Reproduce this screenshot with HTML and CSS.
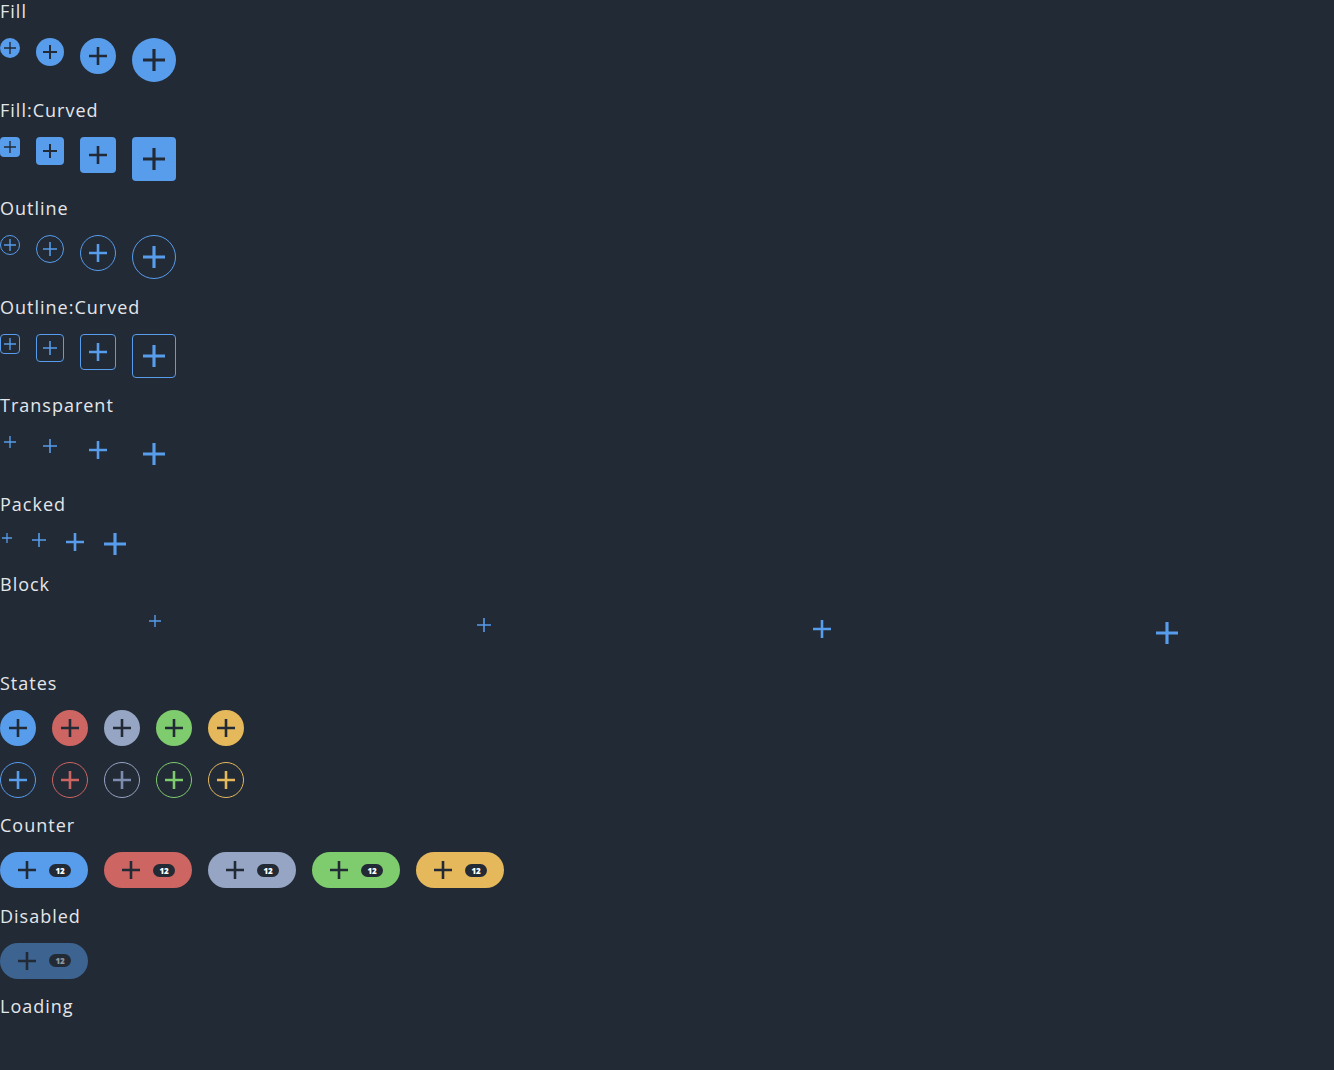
FILE: index.html
```html
<!DOCTYPE html>
<html lang="en">
<head>
<meta charset="utf-8">
<title>Buttons</title>
<link rel="stylesheet" href="styles.css">
</head>
<body>
<main class="page">
  <section class="sec">
    <h2 class="title">Fill</h2>
    <div class="row">
      <button class="btn fill round s1"><svg class="ic" viewBox="0 0 14 14"><path d="M6.2 0h1.6v6.2H14v1.6H7.8V14H6.2V7.8H0V6.2h6.2z"/></svg></button>
      <button class="btn fill round s2"><svg class="ic" viewBox="0 0 14 14"><path d="M6 0h2v6h6v2H8v6H6V8H0V6h6z"/></svg></button>
      <button class="btn fill round s3"><svg class="ic" viewBox="0 0 14 14"><path d="M6 0h2v6h6v2H8v6H6V8H0V6h6z"/></svg></button>
      <button class="btn fill round s4"><svg class="ic" viewBox="0 0 14 14"><path d="M6 0h2v6h6v2H8v6H6V8H0V6h6z"/></svg></button>
    </div>
  </section>
  <section class="sec">
    <h2 class="title">Fill:Curved</h2>
    <div class="row">
      <button class="btn fill curved s1"><svg class="ic" viewBox="0 0 14 14"><path d="M6.2 0h1.6v6.2H14v1.6H7.8V14H6.2V7.8H0V6.2h6.2z"/></svg></button>
      <button class="btn fill curved s2"><svg class="ic" viewBox="0 0 14 14"><path d="M6 0h2v6h6v2H8v6H6V8H0V6h6z"/></svg></button>
      <button class="btn fill curved s3"><svg class="ic" viewBox="0 0 14 14"><path d="M6 0h2v6h6v2H8v6H6V8H0V6h6z"/></svg></button>
      <button class="btn fill curved s4"><svg class="ic" viewBox="0 0 14 14"><path d="M6 0h2v6h6v2H8v6H6V8H0V6h6z"/></svg></button>
    </div>
  </section>
  <section class="sec">
    <h2 class="title">Outline</h2>
    <div class="row">
      <button class="btn outline round s1"><svg class="ic" viewBox="0 0 14 14"><path d="M6.2 0h1.6v6.2H14v1.6H7.8V14H6.2V7.8H0V6.2h6.2z"/></svg></button>
      <button class="btn outline round s2"><svg class="ic" viewBox="0 0 14 14"><path d="M6.2 0h1.6v6.2H14v1.6H7.8V14H6.2V7.8H0V6.2h6.2z"/></svg></button>
      <button class="btn outline round s3"><svg class="ic" viewBox="0 0 14 14"><path d="M6 0h2v6h6v2H8v6H6V8H0V6h6z"/></svg></button>
      <button class="btn outline round s4"><svg class="ic" viewBox="0 0 14 14"><path d="M6 0h2v6h6v2H8v6H6V8H0V6h6z"/></svg></button>
    </div>
  </section>
  <section class="sec">
    <h2 class="title">Outline:Curved</h2>
    <div class="row">
      <button class="btn outline curved s1"><svg class="ic" viewBox="0 0 14 14"><path d="M6.2 0h1.6v6.2H14v1.6H7.8V14H6.2V7.8H0V6.2h6.2z"/></svg></button>
      <button class="btn outline curved s2"><svg class="ic" viewBox="0 0 14 14"><path d="M6.2 0h1.6v6.2H14v1.6H7.8V14H6.2V7.8H0V6.2h6.2z"/></svg></button>
      <button class="btn outline curved s3"><svg class="ic" viewBox="0 0 14 14"><path d="M6 0h2v6h6v2H8v6H6V8H0V6h6z"/></svg></button>
      <button class="btn outline curved s4"><svg class="ic" viewBox="0 0 14 14"><path d="M6 0h2v6h6v2H8v6H6V8H0V6h6z"/></svg></button>
    </div>
  </section>
  <section class="sec">
    <h2 class="title">Transparent</h2>
    <div class="row">
      <button class="btn ghost s1"><svg class="ic" viewBox="0 0 14 14"><path d="M6.2 0h1.6v6.2H14v1.6H7.8V14H6.2V7.8H0V6.2h6.2z"/></svg></button>
      <button class="btn ghost s2"><svg class="ic" viewBox="0 0 14 14"><path d="M6.2 0h1.6v6.2H14v1.6H7.8V14H6.2V7.8H0V6.2h6.2z"/></svg></button>
      <button class="btn ghost s3"><svg class="ic" viewBox="0 0 14 14"><path d="M6 0h2v6h6v2H8v6H6V8H0V6h6z"/></svg></button>
      <button class="btn ghost s4"><svg class="ic" viewBox="0 0 14 14"><path d="M6 0h2v6h6v2H8v6H6V8H0V6h6z"/></svg></button>
    </div>
  </section>
  <section class="sec">
    <h2 class="title">Packed</h2>
    <div class="row">
      <button class="btn ghost packed s1"><svg class="ic" viewBox="0 0 14 14"><path d="M6.1 0h1.8v6.1H14v1.8H7.9V14H6.1V7.9H0V6.1h6.1z"/></svg></button>
      <button class="btn ghost packed s2"><svg class="ic" viewBox="0 0 14 14"><path d="M6.2 0h1.6v6.2H14v1.6H7.8V14H6.2V7.8H0V6.2h6.2z"/></svg></button>
      <button class="btn ghost packed s3"><svg class="ic" viewBox="0 0 14 14"><path d="M6 0h2v6h6v2H8v6H6V8H0V6h6z"/></svg></button>
      <button class="btn ghost packed s4"><svg class="ic" viewBox="0 0 14 14"><path d="M6 0h2v6h6v2H8v6H6V8H0V6h6z"/></svg></button>
    </div>
  </section>
  <section class="sec">
    <h2 class="title">Block</h2>
    <div class="row">
      <button class="btn ghost block s1"><svg class="ic" viewBox="0 0 14 14"><path d="M6.2 0h1.6v6.2H14v1.6H7.8V14H6.2V7.8H0V6.2h6.2z"/></svg></button>
      <button class="btn ghost block s2"><svg class="ic" viewBox="0 0 14 14"><path d="M6.2 0h1.6v6.2H14v1.6H7.8V14H6.2V7.8H0V6.2h6.2z"/></svg></button>
      <button class="btn ghost block s3"><svg class="ic" viewBox="0 0 14 14"><path d="M6 0h2v6h6v2H8v6H6V8H0V6h6z"/></svg></button>
      <button class="btn ghost block s4"><svg class="ic" viewBox="0 0 14 14"><path d="M6 0h2v6h6v2H8v6H6V8H0V6h6z"/></svg></button>
    </div>
  </section>
  <section class="sec">
    <h2 class="title">States</h2>
    <div class="stack">
      <div class="row">
        <button class="btn fill round s3 c-blue"><svg class="ic" viewBox="0 0 14 14"><path d="M6 0h2v6h6v2H8v6H6V8H0V6h6z"/></svg></button>
        <button class="btn fill round s3 c-red"><svg class="ic" viewBox="0 0 14 14"><path d="M6 0h2v6h6v2H8v6H6V8H0V6h6z"/></svg></button>
        <button class="btn fill round s3 c-gray"><svg class="ic" viewBox="0 0 14 14"><path d="M6 0h2v6h6v2H8v6H6V8H0V6h6z"/></svg></button>
        <button class="btn fill round s3 c-green"><svg class="ic" viewBox="0 0 14 14"><path d="M6 0h2v6h6v2H8v6H6V8H0V6h6z"/></svg></button>
        <button class="btn fill round s3 c-yellow"><svg class="ic" viewBox="0 0 14 14"><path d="M6 0h2v6h6v2H8v6H6V8H0V6h6z"/></svg></button>
      </div>
      <div class="row">
        <button class="btn outline round s3 c-blue"><svg class="ic" viewBox="0 0 14 14"><path d="M6 0h2v6h6v2H8v6H6V8H0V6h6z"/></svg></button>
        <button class="btn outline round s3 c-red"><svg class="ic" viewBox="0 0 14 14"><path d="M6 0h2v6h6v2H8v6H6V8H0V6h6z"/></svg></button>
        <button class="btn outline round s3 c-gray"><svg class="ic" viewBox="0 0 14 14"><path d="M6 0h2v6h6v2H8v6H6V8H0V6h6z"/></svg></button>
        <button class="btn outline round s3 c-green"><svg class="ic" viewBox="0 0 14 14"><path d="M6 0h2v6h6v2H8v6H6V8H0V6h6z"/></svg></button>
        <button class="btn outline round s3 c-yellow"><svg class="ic" viewBox="0 0 14 14"><path d="M6 0h2v6h6v2H8v6H6V8H0V6h6z"/></svg></button>
      </div>
    </div>
  </section>
  <section class="sec">
    <h2 class="title">Counter</h2>
    <div class="row">
      <button class="btn fill pill c-blue"><svg class="ic" viewBox="0 0 14 14"><path d="M6 0h2v6h6v2H8v6H6V8H0V6h6z"/></svg><span class="badge">12</span></button>
      <button class="btn fill pill c-red"><svg class="ic" viewBox="0 0 14 14"><path d="M6 0h2v6h6v2H8v6H6V8H0V6h6z"/></svg><span class="badge">12</span></button>
      <button class="btn fill pill c-gray"><svg class="ic" viewBox="0 0 14 14"><path d="M6 0h2v6h6v2H8v6H6V8H0V6h6z"/></svg><span class="badge">12</span></button>
      <button class="btn fill pill c-green"><svg class="ic" viewBox="0 0 14 14"><path d="M6 0h2v6h6v2H8v6H6V8H0V6h6z"/></svg><span class="badge">12</span></button>
      <button class="btn fill pill c-yellow"><svg class="ic" viewBox="0 0 14 14"><path d="M6 0h2v6h6v2H8v6H6V8H0V6h6z"/></svg><span class="badge">12</span></button>
    </div>
  </section>
  <section class="sec">
    <h2 class="title">Disabled</h2>
    <div class="row">
      <button class="btn fill pill c-blue" disabled><svg class="ic" viewBox="0 0 14 14"><path d="M6 0h2v6h6v2H8v6H6V8H0V6h6z"/></svg><span class="badge">12</span></button>
    </div>
  </section>
  <section class="sec">
    <h2 class="title">Loading</h2>
  </section>
</main>
</body>
</html>
```

FILE: styles.css
```css
* { box-sizing: border-box; }

html, body {
  margin: 0;
  padding: 0;
  background: #222a35;
}

body {
  font-family: "Open Sans", "Liberation Sans", sans-serif;
  color: #e4e6ea;
  overflow: hidden;
}

.page {
  display: flex;
  flex-direction: column;
}

.sec {
  display: flex;
  flex-direction: column;
  gap: 16px;
  padding-bottom: 16.5px;
}

.title {
  margin: 0;
  font-size: 18px;
  font-weight: 400;
  line-height: 22px;
  height: 22px;
  letter-spacing: 1px;
}

.row {
  display: flex;
  align-items: flex-start;
  gap: 16px;
}

.stack {
  display: flex;
  flex-direction: column;
  gap: 16px;
}

.btn {
  --c: #589cec;
  display: flex;
  align-items: center;
  justify-content: center;
  flex: 0 0 auto;
  margin: 0;
  padding: 0;
  border: 0;
  background: transparent;
  color: var(--c);
  font: inherit;
  cursor: pointer;
}

.ic {
  display: block;
  fill: currentColor;
  flex: 0 0 auto;
}

.s1 { width: 20px; height: 20px; }
.s1 .ic { width: 12px; height: 12px; }
.s2 { width: 28px; height: 28px; }
.s2 .ic { width: 14px; height: 14px; }
.s3 { width: 36px; height: 36px; }
.s3 .ic { width: 18px; height: 18px; }
.s4 { width: 44px; height: 44px; }
.s4 .ic { width: 22px; height: 22px; }

.packed.s1 { width: 14px; height: 14px; }
.packed.s1 .ic { width: 10px; height: 10px; }
.packed.s2 { width: 18px; height: 18px; }
.packed.s3 { width: 22px; height: 22px; }
.packed.s4 { width: 26px; height: 26px; }

.block { flex: 1 1 auto; }

.round { border-radius: 50%; }
.curved { border-radius: 4px; }

.fill {
  background: var(--c);
  color: #222a35;
}

.outline {
  border: 1px solid var(--c);
  color: var(--c);
}

.c-blue { --c: #589cec; }
.c-red { --c: #cd6562; }
.c-gray { --c: #95a5c3; }
.c-green { --c: #7ecc6e; }
.c-yellow { --c: #e5b85c; }

.outline.c-gray { color: #7d8db0; }

.pill {
  width: 88px;
  height: 36px;
  border-radius: 18px;
  padding: 0 16px 0 18px;
  justify-content: flex-start;
  gap: 13px;
}

.pill .ic { width: 18px; height: 18px; }

.badge {
  display: flex;
  align-items: center;
  justify-content: center;
  width: 22px;
  height: 13px;
  border-radius: 7px;
  background: #222a35;
  color: #ffffff;
  font-family: "Open Sans", "Liberation Sans", sans-serif;
  font-size: 8px;
  font-weight: 800;
  line-height: 13px;
  letter-spacing: -0.2px;
}

.btn:disabled {
  opacity: 0.5;
  cursor: default;
}
```
